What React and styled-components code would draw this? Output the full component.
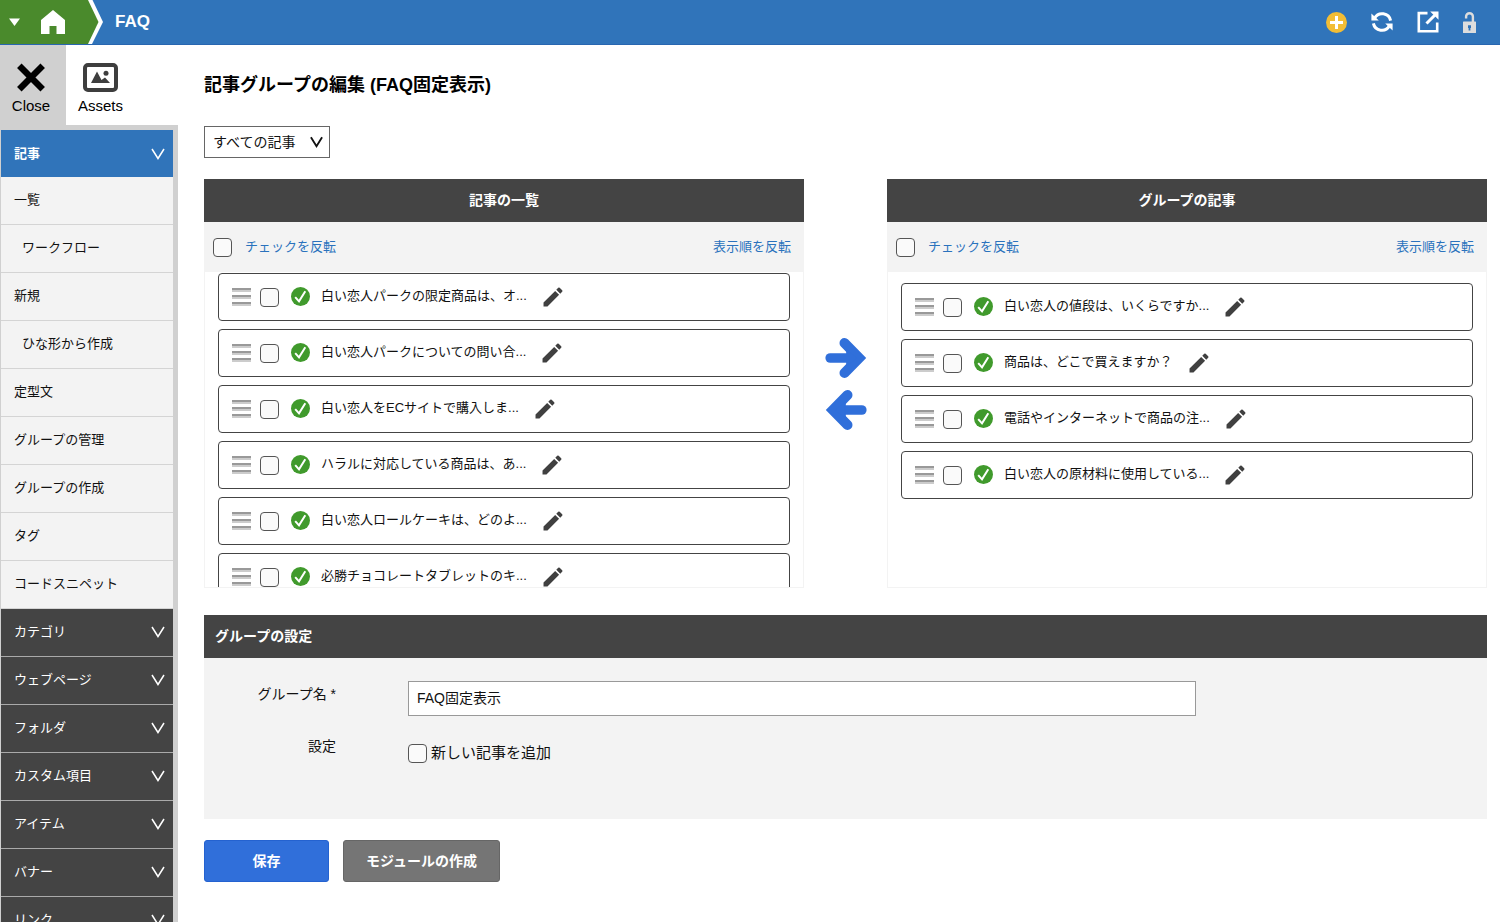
import React from 'react';
import styled, {createGlobalStyle, css} from 'styled-components';

const GlobalStyle = createGlobalStyle`
  * {
    box-sizing: border-box;
  }

  body {
    margin: 0;
    background: #fff;
    color: #111;
    font-family: 'Liberation Sans', 'Noto Sans CJK JP', sans-serif;
    font-size: 15px;
    line-height: 20px;
  }

  button, input, select {
    font: inherit;
    color: inherit;
  }

  svg {
    display: block;
    flex: none;
  }
`;

const Page = styled.div`
  display: flex;
  flex-direction: column;
  height: 100vh;
  overflow: hidden;
`;

const TopBar = styled.header`
  display: flex;
  align-items: center;
  flex: none;
  height: 45px;
  padding-right: 24px;
  background: #3074ba;
  border-bottom: 1px solid #2866b0;
`;

const HomeButton = styled.button`
  display: block;
  padding: 0;
  border: 0;
  background: none;
`;

const SiteName = styled.a`
  margin-left: 11px;
  color: #fff;
  font-size: 17px;
  font-weight: bold;
  text-decoration: none;
`;

const TopActions = styled.nav`
  display: flex;
  align-items: center;
  gap: 24px;
  margin-left: auto;
`;

const IconButton = styled.button`
  display: block;
  flex: none;
  padding: 0;
  border: 0;
  background: none;
  cursor: pointer;
`;

const Columns = styled.div`
  display: flex;
  flex: 1;
  min-height: 0;
`;

const Sidebar = styled.aside`
  display: flex;
  flex-direction: column;
  flex: none;
  width: 178px;
  overflow: hidden;
`;

const Tools = styled.div`
  display: flex;
  flex: none;
  height: 80px;
`;

const Tool = styled.button`
  display: flex;
  flex-direction: column;
  align-items: center;
  gap: 4px;
  width: ${props => (props.$active ? '66px' : '69px')};
  padding: 18px ${props => (props.$active ? '4px' : '0')} 0 0;
  border: 0;
  background: ${props => (props.$active ? '#d0d0d0' : '#fff')};
  color: #000;
  font-size: 15px;
`;

const Menu = styled.nav`
  flex: 1;
  min-height: 0;
  overflow: hidden;
  padding: 5px 5px 0 1px;
  background: #d0d0d0;
`;

const MenuItem = styled.a`
  display: flex;
  align-items: center;
  justify-content: space-between;
  height: 48px;
  padding: 0 8px 2px ${props => (props.$indent ? '21px' : '13px')};
  border-bottom: 1px solid #d4d4d4;
  background: #f3f3f3;
  color: #111;
  font-size: 13px;
  text-decoration: none;

  ${props => props.$kind === 'current' && css`
    height: 47px;
    padding-bottom: 0;
    border-bottom: 0;
    background: #3074ba;
    color: #fff;
    font-weight: bold;
  `}

  ${props => props.$kind === 'section' && css`
    border-bottom-color: #aaa;
    background: #444;
    color: #fff;
  `}
`;

const Main = styled.main`
  flex: 1;
  min-width: 0;
  padding: 28px 13px 40px 26px;
`;

const Title = styled.h1`
  margin: 0 0 29px;
  color: #000;
  font-size: 18px;
  line-height: 24px;
`;

const SelectBox = styled.div`
  position: relative;
  width: 126px;
  margin-bottom: 21px;

  svg {
    position: absolute;
    top: 10px;
    right: 7px;
    pointer-events: none;
  }
`;

const Select = styled.select`
  display: block;
  width: 100%;
  height: 32px;
  padding: 0 8px;
  border: 1px solid #666;
  border-radius: 0;
  background: #fff;
  appearance: none;
  font-size: 14px;
`;

const Transfer = styled.div`
  display: flex;
  margin-bottom: 27px;
`;

const Panel = styled.section`
  flex: 1;
  min-width: 0;
`;

const PanelHead = styled.h2`
  margin: 0;
  padding: 11px 11px 12px;
  background: #444;
  color: #fff;
  font-size: 14px;
  line-height: 20px;
  text-align: ${props => (props.$center ? 'center' : 'left')};
`;

const PanelBar = styled.div`
  display: flex;
  align-items: center;
  height: 49px;
  padding: 2px 13px 0 9px;
  background: #f3f3f3;
`;

const CheckBox = styled.input.attrs({type: 'checkbox'})`
  flex: none;
  width: 19px;
  height: 19px;
  margin: 0;
  border: 1px solid #555;
  border-radius: 4px;
  background: #fafafa;
  appearance: none;

  &:checked {
    background: #3074ba;
  }
`;

const BarLink = styled.a`
  padding-bottom: 2px;
  margin-left: ${props => (props.$end ? 'auto' : '13px')};
  color: #2a72bd;
  font-size: 13px;
  text-decoration: none;
`;

const List = styled.ul`
  display: flex;
  flex-direction: column;
  gap: 8px;
  height: 317px;
  margin: 0;
  padding: ${props => (props.$scrolled ? '1px' : '11px')} 13px 0;
  overflow: hidden;
  border: 1px solid #f3f3f3;
  list-style: none;
`;

const Row = styled.li`
  display: flex;
  align-items: center;
  flex: none;
  height: 48px;
  padding-left: 13px;
  border: 1px solid #444;
  border-radius: 4px;
  background: #fff;
`;

const Handle = styled.span`
  display: flex;
  flex-direction: column;
  gap: 3px;
  width: 19px;
  margin-right: 9px;

  i {
    height: 4px;
    border-top: 2px solid #999;
    background: #ccc;
  }
`;

const RowLabel = styled.label`
  display: flex;
  align-items: center;
  gap: 12px;
  font-size: 13px;

  svg {
    margin: 0 -1px 2px 0;
  }

  span {
    padding-bottom: 2px;
  }
`;

const EditButton = styled(IconButton)`
  margin-left: 16px;
`;

const Arrows = styled.div`
  display: flex;
  flex-direction: column;
  align-items: center;
  gap: 12px;
  flex: none;
  width: 83px;
  padding-top: 159px;
`;

const Settings = styled.section`
  margin-bottom: 21px;
`;

const Fields = styled.div`
  display: grid;
  grid-template-columns: 132px 1fr;
  column-gap: 72px;
  row-gap: 17px;
  padding: 23px 0 56px;
  background: #f3f3f3;
`;

const FieldName = styled.label`
  padding-top: 3px;
  text-align: right;
  font-size: 14px;
`;

const TextInput = styled.input`
  width: 73%;
  height: 35px;
  padding: 0 8px 3px;
  border: 1px solid #999;
  background: #fff;
  font-size: 14px;
`;

const Option = styled.label`
  display: flex;
  align-items: center;
  gap: 4px;
  height: 19px;
`;

const OptionText = styled.span`
  padding-bottom: 2px;
`;

const Group = styled.div`
  padding-top: 11px;
`;

const Buttons = styled.div`
  display: flex;
  gap: 14px;
`;

const Button = styled.button`
  min-width: 125px;
  height: 42px;
  padding: 0 22px;
  border: 1px solid ${props => (props.$primary ? '#2462d0' : '#666')};
  border-radius: 3px;
  background: ${props => (props.$primary ? '#306fda' : '#757575')};
  color: #fff;
  font-size: 14px;
  font-weight: bold;
`;

const Chevron = ({width = 14, height = 12, stroke = 1.5}) => (
  <svg width={width} height={height} viewBox="0 0 14 12" fill="none" stroke="currentColor" strokeWidth={stroke}>
    <path d="M1 1L7 10.5L13 1" />
  </svg>
);

const HomeTab = () => (
  <svg width="104" height="44" viewBox="0 0 104 44">
    <path d="M0 0H92.5L103 22L92 44H0Z" fill="#fff" />
    <path d="M0 0H88L98.5 22L88 44H0Z" fill="#4a8a2c" />
    <path d="M9 18.5H20L14.5 26Z" fill="#fff" />
    <path d="M53 10L65 20V34H56.5V26H49.5V34H41V20Z" fill="#fff" />
  </svg>
);

const AddIcon = () => (
  <svg width="21" height="21" viewBox="0 0 21 21">
    <circle cx="10.5" cy="10.5" r="10.5" fill="#f2bd35" />
    <path d="M10.5 4V17M4 10.5H17" stroke="#fff" strokeWidth="3" />
  </svg>
);

const SyncIcon = () => (
  <svg width="22" height="22" viewBox="0 0 22 22" fill="none">
    <path d="M3.6 7.2A8.6 8.6 0 0 1 19.6 9.6" stroke="#fff" strokeWidth="3" />
    <path d="M18.4 14.8A8.6 8.6 0 0 1 2.4 12.4" stroke="#fff" strokeWidth="3" />
    <path d="M0.4 2.4V9.6H7.8Z M21.6 19.6V12.4H14.2Z" fill="#fff" />
  </svg>
);

const OpenIcon = () => (
  <svg width="22" height="22" viewBox="0 0 22 22" fill="none" stroke="#fff">
    <path d="M10.5 2.1H1.8V20.2H20.2V11.5" strokeWidth="2.6" />
    <path d="M9.5 12.5L18 4" strokeWidth="3" />
    <path d="M13.2 0.6H21.5V8.8Z" fill="#fff" stroke="none" />
  </svg>
);

const LockIcon = () => (
  <svg width="13" height="21" viewBox="0 0 13 21">
    <path d="M3.1 6.5V4.6A3.4 3.4 0 0 1 9.9 4.6V10" fill="none" stroke="#ddd" strokeWidth="2.4" />
    <rect y="9.5" width="13" height="11.5" rx="0.6" fill="#ddd" />
    <path d="M5 13.2H8V16H7.4V18.5H5.6V16H5Z" fill="#3074ba" />
  </svg>
);

const CloseIcon = () => (
  <svg width="28" height="29" viewBox="0 0 28 28" stroke="#000" strokeWidth="6.4">
    <path d="M2.3 2.3L25.7 25.7M25.7 2.3L2.3 25.7" />
  </svg>
);

const AssetsIcon = () => (
  <svg width="35" height="29" viewBox="0 0 35 29">
    <rect x="2" y="2" width="31" height="25" rx="3" fill="#fff" stroke="#3e3e3e" strokeWidth="4" />
    <path d="M8 20L14 8.5L18.5 17L22 14.5L27 20Z" fill="#3e3e3e" />
    <circle cx="23" cy="10.3" r="2.5" fill="#3e3e3e" />
  </svg>
);

const OkIcon = () => (
  <svg width="19" height="19" viewBox="0 0 19 19">
    <circle cx="9.5" cy="9.5" r="9.5" fill="#409a2c" />
    <path d="M4.2 10.2L8 14.4L14.3 4.2" fill="none" stroke="#fff" strokeWidth="2" />
  </svg>
);

const PencilIcon = () => (
  <svg width="20" height="20" viewBox="2.5 2.5 19 19" fill="#404040">
    <path d="M3 17.25V21h3.75L17.81 9.94l-3.75-3.75L3 17.25zM20.71 7.04a1 1 0 0 0 0-1.41l-2.34-2.34a1 1 0 0 0-1.41 0l-1.83 1.83 3.75 3.75 1.83-1.83z" />
  </svg>
);

const ArrowIcon = ({left}) => (
  <svg width="42" height="40" viewBox="0 0 42 40">
    <g fill="#306fda" stroke="#306fda" strokeLinecap="round" transform={left ? 'translate(42 0) scale(-1 1)' : undefined}>
      <path d="M5.2 20H30" strokeWidth="9.6" />
      <path d="M19.5 5L34.2 20L19.5 35" fill="none" strokeWidth="10" />
      <path d="M22 12L32 20L22 28Z" strokeWidth="1" />
    </g>
  </svg>
);

const subItems = [
  {text: '一覧'},
  {text: 'ワークフロー', indent: true},
  {text: '新規'},
  {text: 'ひな形から作成', indent: true},
  {text: '定型文'},
  {text: 'グループの管理'},
  {text: 'グループの作成'},
  {text: 'タグ'},
  {text: 'コードスニペット'},
];

const sections = ['カテゴリ', 'ウェブページ', 'フォルダ', 'カスタム項目', 'アイテム', 'バナー', 'リンク'];

const articles = [
  '白い恋人パークの限定商品は、オ...',
  '白い恋人パークについての問い合...',
  '白い恋人をECサイトで購入しま...',
  'ハラルに対応している商品は、あ...',
  '白い恋人ロールケーキは、どのよ...',
  '必勝チョコレートタブレットのキ...',
];

const groupArticles = [
  '白い恋人の値段は、いくらですか...',
  '商品は、どこで買えますか？',
  '電話やインターネットで商品の注...',
  '白い恋人の原材料に使用している...',
];

const ArticlePanel = ({title, items, scrolled}) => (
  <Panel>
    <PanelHead $center>{title}</PanelHead>
    <PanelBar>
      <CheckBox aria-label="チェックを反転" />
      <BarLink href="#">チェックを反転</BarLink>
      <BarLink href="#" $end>表示順を反転</BarLink>
    </PanelBar>
    <List $scrolled={scrolled}>
      {items.map(item => (
        <Row key={item}>
          <Handle><i /><i /><i /></Handle>
          <RowLabel>
            <CheckBox />
            <OkIcon />
            <span>{item}</span>
          </RowLabel>
          <EditButton aria-label="編集"><PencilIcon /></EditButton>
        </Row>
      ))}
    </List>
  </Panel>
);

const App = () => (
  <Page>
    <GlobalStyle />
    <TopBar>
      <HomeButton aria-label="ホーム"><HomeTab /></HomeButton>
      <SiteName href="#">FAQ</SiteName>
      <TopActions>
        <IconButton aria-label="追加"><AddIcon /></IconButton>
        <IconButton aria-label="更新"><SyncIcon /></IconButton>
        <IconButton aria-label="開く"><OpenIcon /></IconButton>
        <IconButton aria-label="ロック"><LockIcon /></IconButton>
      </TopActions>
    </TopBar>
    <Columns>
      <Sidebar>
        <Tools>
          <Tool $active><CloseIcon />Close</Tool>
          <Tool><AssetsIcon />Assets</Tool>
        </Tools>
        <Menu>
          <MenuItem href="#" $kind="current">記事<Chevron /></MenuItem>
          {subItems.map(item => (
            <MenuItem key={item.text} href="#" $indent={item.indent}>{item.text}</MenuItem>
          ))}
          {sections.map(text => (
            <MenuItem key={text} href="#" $kind="section">{text}<Chevron /></MenuItem>
          ))}
        </Menu>
      </Sidebar>
      <Main>
        <Title>記事グループの編集 (FAQ固定表示)</Title>
        <SelectBox>
          <Select aria-label="記事の絞り込み">
            <option>すべての記事</option>
          </Select>
          <Chevron width={13} height={12} stroke={2} />
        </SelectBox>
        <Transfer>
          <ArticlePanel title="記事の一覧" items={articles} scrolled />
          <Arrows>
            <IconButton aria-label="グループに追加"><ArrowIcon /></IconButton>
            <IconButton aria-label="グループから削除"><ArrowIcon left /></IconButton>
          </Arrows>
          <ArticlePanel title="グループの記事" items={groupArticles} />
        </Transfer>
        <Settings>
          <PanelHead>グループの設定</PanelHead>
          <Fields>
            <FieldName htmlFor="group-name">グループ名 *</FieldName>
            <TextInput id="group-name" defaultValue="FAQ固定表示" />
            <FieldName htmlFor="add-new">設定</FieldName>
            <Group>
              <Option>
                <CheckBox id="add-new" />
                <OptionText>新しい記事を追加</OptionText>
              </Option>
            </Group>
          </Fields>
        </Settings>
        <Buttons>
          <Button $primary>保存</Button>
          <Button>モジュールの作成</Button>
        </Buttons>
      </Main>
    </Columns>
  </Page>
);

export default App;
